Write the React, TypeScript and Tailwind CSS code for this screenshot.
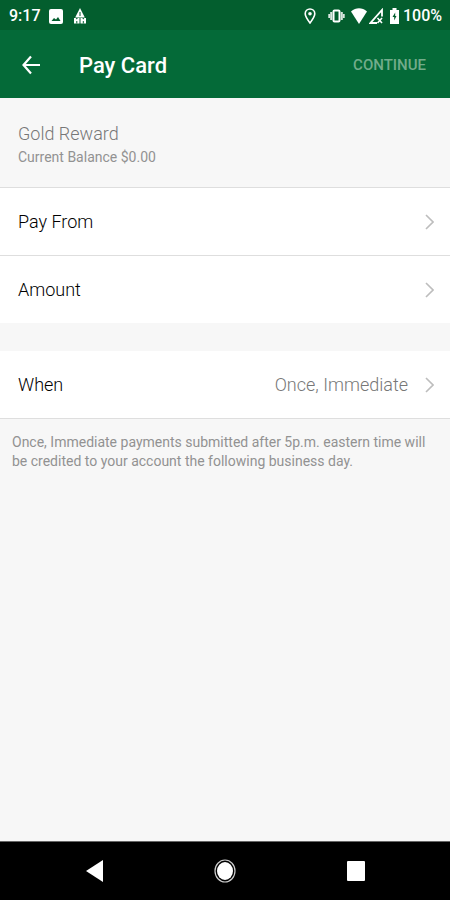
type Row = {
  label: string;
  value?: string;
};

const ACCOUNT_ROWS: Row[] = [{ label: "Pay From" }, { label: "Amount" }];
const SCHEDULE_ROWS: Row[] = [{ label: "When", value: "Once, Immediate" }];

function StatusBar() {
  return (
    <div className="flex h-[30px] items-center justify-between bg-[#035e2e] pt-[2px] pr-2 pl-[9px] text-white">
      <div className="flex items-center">
        <span className="w-10 text-base font-medium">9:17</span>
        <svg className="h-[15px] w-[14px]" viewBox="0 0 14 15" aria-hidden="true">
          <rect width="14" height="15" rx="2" fill="currentColor" />
          <path d="M2.500 12l2.500-3 2 1.500 2-2.500 2.500 4z" fill="#035e2e" />
        </svg>
        <svg className="ml-[10px] h-4 w-[14px]" viewBox="0 0 14 16" aria-hidden="true">
          <path d="M7 0l4.800 9.500h-9.600z" fill="currentColor" />
          <path d="M7 4v4" stroke="#035e2e" strokeWidth="1" />
          <path d="M1 10h1.800l1 1.500 1-1.500h1.700v5.500H1zM7.500 10h1.800l1 1.500 1-1.500H13v5.500H7.500z" fill="currentColor" />
          <path d="M3.800 13v2.500M10.300 13v2.500" stroke="#035e2e" strokeWidth="1" />
        </svg>
      </div>
      <div className="flex items-center">
        <svg className="h-4 w-3" viewBox="0 0 12 16" fill="none" stroke="currentColor" aria-hidden="true">
          <path d="M6 15C3 11 1.200 8.500 1.200 5.800a4.800 4.800 0 0 1 9.600 0C10.800 8.500 9 11 6 15z" strokeWidth="1.600" />
          <circle cx="6" cy="5.800" r="1.800" fill="currentColor" stroke="none" />
        </svg>
        <svg className="ml-3 h-[14px] w-[17px]" viewBox="0 0 17 14" fill="none" stroke="currentColor" aria-hidden="true">
          <rect x="5.500" y="1.500" width="6" height="11" rx="1" strokeWidth="2" />
          <path d="M3.200 3v8M13.800 3v8" strokeWidth="2" strokeOpacity="0.85" />
          <path d="M1.200 5v4M15.800 5v4" strokeWidth="1.800" strokeOpacity="0.85" />
        </svg>
        <svg className="ml-[6px] h-4 w-4" viewBox="0 0 16 16" aria-hidden="true">
          <path d="M0 3.500C5-.8 11-.8 16 3.500L8 16z" fill="currentColor" />
        </svg>
        <svg className="ml-[2px] h-4 w-[14px]" viewBox="0 0 14 16" fill="none" stroke="currentColor" aria-hidden="true">
          <path d="M13 8.500V2L1.500 15H8" strokeWidth="1.800" />
          <path d="M8.500 10l4.500 5M13 10L8.500 15" strokeWidth="1.600" />
        </svg>
        <svg className="ml-[7px] h-4 w-[9px]" viewBox="0 0 9 16" aria-hidden="true">
          <path d="M2.500 0h4v2H9v14H0V2h2.500z" fill="currentColor" />
          <path d="M5.200 4.500L2.500 9h1.700v3.500L6.500 8H5.200z" fill="#035e2e" />
        </svg>
        <span className="ml-[4px] text-base font-medium">100%</span>
      </div>
    </div>
  );
}

function Chevron() {
  return (
    <svg className="ml-[17px] h-4 w-[9px] text-[#bdbdbd]" viewBox="0 0 9 16" fill="none" stroke="currentColor" strokeWidth="1.600" aria-hidden="true">
      <path d="M1 1l7 7-7 7" />
    </svg>
  );
}

function RowList({ rows }: { rows: Row[] }) {
  return (
    <ul className="divide-y divide-[#dedede] bg-white">
      {rows.map((row) => (
        <li key={row.label}>
          <button type="button" className="flex h-[67px] w-full items-center pr-4 pl-[18px] text-left text-lg font-light">
            <span className="flex-1 text-black">{row.label}</span>
            {row.value && <span className="text-[#777]">{row.value}</span>}
            <Chevron />
          </button>
        </li>
      ))}
    </ul>
  );
}

export default function App() {
  return (
    <div className="flex min-h-screen flex-col bg-[#f7f7f7] font-['Roboto',sans-serif]">
      <StatusBar />
      <header className="flex h-[68px] items-center bg-[#046a38] pt-[2px] pr-6 pl-[22px] text-white">
        <button type="button" aria-label="Back">
          <svg className="h-5 w-[18px]" viewBox="0 0 18 20" fill="none" stroke="currentColor" strokeWidth="2.200" aria-hidden="true">
            <path d="M18 10H1.500M9 1.500L1.500 10 9 18.500" />
          </svg>
        </button>
        <h1 className="ml-[39px] flex-1 text-[22px] font-medium">Pay Card</h1>
        <button type="button" className="text-[15px] font-medium text-[#72ac8b]">
          CONTINUE
        </button>
      </header>

      <main className="flex-1">
        <section className="border-b border-[#dedede] px-[18px] pt-[23px] pb-5 text-[#929292]">
          <h2 className="text-lg leading-[26px] font-light text-[#777]">Gold Reward</h2>
          <p className="text-sm leading-5">Current Balance $0.00</p>
        </section>
        <RowList rows={ACCOUNT_ROWS} />
        <div className="mt-7 border-b border-[#dedede]">
          <RowList rows={SCHEDULE_ROWS} />
        </div>
        <p className="px-3 pt-[14px] text-sm leading-[19px] text-[#929292]">
          Once, Immediate payments submitted after 5p.m. eastern time will be credited to your account the following business day.
        </p>
      </main>

      <nav className="flex h-[59px] items-center justify-between border-t border-[#666] bg-black px-[85px] text-white">
        <button type="button" aria-label="Back">
          <svg className="h-[22px] w-[18px]" viewBox="0 0 18 22" aria-hidden="true">
            <path d="M18 0v22L1 11z" fill="currentColor" />
          </svg>
        </button>
        <button type="button" aria-label="Home">
          <svg className="h-6 w-[22px]" viewBox="0 0 22 24" aria-hidden="true">
            <ellipse cx="11" cy="12" rx="10" ry="11" fill="none" stroke="#ccc" strokeWidth="1.200" />
            <ellipse cx="11" cy="12" rx="8" ry="9" fill="currentColor" />
          </svg>
        </button>
        <button type="button" aria-label="Overview">
          <svg className="h-5 w-[18px]" viewBox="0 0 18 20" aria-hidden="true">
            <rect width="18" height="20" rx="1" fill="currentColor" />
          </svg>
        </button>
      </nav>
    </div>
  );
}
